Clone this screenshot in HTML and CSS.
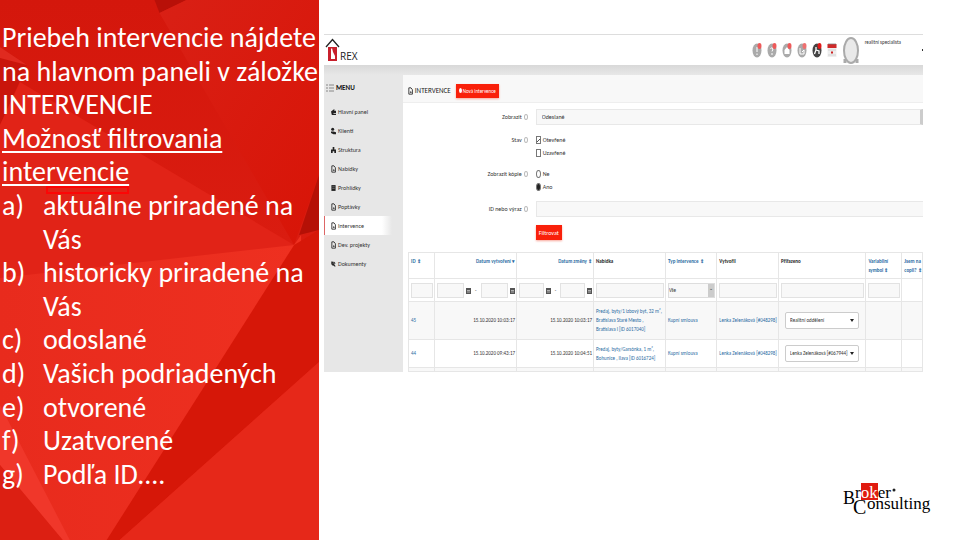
FILE: index.html
```
<!DOCTYPE html>
<html lang="sk">
<head>
<meta charset="utf-8">
<title>Intervencie</title>
<link rel="stylesheet" href="styles.css">
</head>
<body>
<svg class="defs" width="0" height="0" aria-hidden="true">
  <symbol id="doc" viewBox="0 0 6 9"><path d="M1 .7h2.6L5.3 3v5.3H1z" fill="none" stroke="#222" stroke-width="1"/><path d="M2 6.5l1.4-2 1.2 2z" fill="#222"/></symbol>
  <symbol id="share" viewBox="0 0 6 9"><path d="M0 4l4-3v2h2v3H3v1h3v1H1z" fill="#222"/></symbol>
  <symbol id="people" viewBox="0 0 6 9"><circle cx="2" cy="2.5" r="1.8" fill="#222"/><path d="M0 5h3l3 1v2.500H3L0 7z" fill="#222"/></symbol>
  <symbol id="tree" viewBox="0 0 6 9"><path d="M2 1h2v3h2v4H4V6H2v2H0V4h2z" fill="#222"/></symbol>
  <symbol id="list" viewBox="0 0 6 9"><path d="M.5 1h5v7h-5z" fill="#222"/><path d="M1.500 3h3M1.500 5h3" stroke="#aaa" stroke-width=".6"/></symbol>
  <symbol id="clip" viewBox="0 0 6 9"><path d="M1 1.500l4 6M1 1.500v3l2 2M3 2l2 2" fill="none" stroke="#222" stroke-width="1.300"/></symbol>
  <symbol id="cal" viewBox="0 0 5 7"><path d="M0 1h5v6H0z" fill="#555"/><path d="M1 3.500h3M1 5h3" stroke="#ddd" stroke-width=".7"/></symbol>
</svg>
<main class="slide">
  <section class="notes">
    <svg class="facets" viewBox="0 0 320 540" preserveAspectRatio="none" aria-hidden="true">
      <defs>
        <linearGradient id="base" x1="0" y1="0" x2="0" y2="1"><stop offset="0" stop-color="#d4170c"/><stop offset="1" stop-color="#e12215"/></linearGradient>
        <linearGradient id="glow" x1="0" y1="0" x2="1" y2="0"><stop offset="0" stop-color="#e82b1d"/><stop offset="1" stop-color="#ee3020"/></linearGradient>
        <linearGradient id="right" x1="0" y1="0" x2="1" y2="1"><stop offset="0" stop-color="#d92015"/><stop offset="1" stop-color="#d81407"/></linearGradient>
      </defs>
      <path d="M0 0h320v540H0z" fill="url(#base)"/>
      <path d="M155 0h32l-27 13z" fill="#b81008"/>
      <path d="M187 0h133v175l-25 70L160 13z" fill="url(#right)"/>
      <path d="M0 47l27 18L0 125z" fill="#c9150b"/>
      <path d="M0 47l27 18L0 58z" fill="#e02a1f"/>
      <path d="M20 82L295 245 0 295V125z" fill="#e12317"/>
      <path d="M0 278l295-33 7-10v75L108 540H0z" fill="url(#glow)"/>
      <path d="M295 245l25-15v132L120 540h-13z" fill="#d61708"/>
      <path d="M320 175l-20 60 20-5z" fill="#b51006"/>
      <path d="M320 362v178H120z" fill="#e62819"/>
      <path d="M0 405l70 135h-8L0 465z" fill="#f0372a"/>
      <path d="M0 465l63 75H0z" fill="#dc1f12"/>
    </svg>
    <div class="copy">
      <p>Priebeh intervencie nájdete na hlavnom paneli v záložke INTERVENCIE</p>
      <p><u>Možnosť filtrovania intervencie</u></p>
      <ol class="points">
        <li><span>a)</span><span>aktuálne priradené na Vás</span></li>
        <li><span>b)</span><span>historicky priradené na Vás</span></li>
        <li><span>c)</span><span>odoslané</span></li>
        <li><span>d)</span><span>Vašich podriadených</span></li>
        <li><span>e)</span><span>otvorené</span></li>
        <li><span>f)</span><span>Uzatvorené</span></li>
        <li><span>g)</span><span>Podľa ID....</span></li>
      </ol>
      <span class="marker"></span>
    </div>
  </section>

  <section class="stage">
    <div class="app">
      <header class="topbar">
        <svg class="house" viewBox="0 0 15 24" aria-hidden="true"><path d="M1 9l6.500-7.500L14 9" fill="none" stroke="#222" stroke-width="1.300"/><path d="M3 9h9v14H3z" fill="#c8202c"/><path d="M6 11l1-1 1 4 2 4v3H6z" fill="#fff"/></svg>
        <span class="brand">REX</span>
        <div class="tools">
          <svg class="badge" viewBox="0 0 10 16"><ellipse cx="5" cy="8.500" rx="4.500" ry="7" fill="#aaa"/><path d="M5 5v5M5 11.500v1.500" stroke="#fff" stroke-width="1"/><ellipse cx="7.500" cy="4" rx="2" ry="3" fill="#ee5a5a"/></svg>
          <svg class="badge" viewBox="0 0 10 16"><ellipse cx="5" cy="8.500" rx="4.500" ry="7" fill="#aaa"/><path d="M3.500 7q1.500-3 2.500 0L5 9.500M5 11v2" stroke="#fff" stroke-width="1" fill="none"/><ellipse cx="7.500" cy="4" rx="2" ry="3" fill="#ee5a5a"/></svg>
          <svg class="badge" viewBox="0 0 10 16"><ellipse cx="5" cy="8.500" rx="4.500" ry="7" fill="#aaa"/><path d="M2.500 8L5 5l2.500 3v4h-5z" fill="#fff"/><ellipse cx="7.500" cy="4" rx="2" ry="3" fill="#ee5a5a"/></svg>
          <svg class="badge" viewBox="0 0 10 16"><ellipse cx="5" cy="8.500" rx="4.500" ry="7" fill="#aaa"/><path d="M3 6v6h4V8L5 10" stroke="#fff" stroke-width="1" fill="none"/><ellipse cx="7.500" cy="4" rx="2" ry="3" fill="#ee7070"/></svg>
          <svg class="badge" viewBox="0 0 10 16"><ellipse cx="5" cy="8.500" rx="4.500" ry="7" fill="#444"/><path d="M4 5v3l-1.500 4M4 8l3 1v3" stroke="#fff" stroke-width="1.300" fill="none"/><ellipse cx="7.500" cy="4" rx="2" ry="3" fill="#e01818"/></svg>
          <svg class="badge" viewBox="0 0 10 16"><path d="M.5 2h9v13h-9z" fill="#eee"/><path d="M.5 2h9v4h-9z" fill="#cf2a2a"/><path d="M2 1v2M4 1v2M6 1v2M8 1v2" stroke="#777" stroke-width=".7"/><path d="M1.500 8h7M1.500 13h7" stroke="#bbb" stroke-dasharray="1 1"/><path d="M4 10.500h2" stroke="#c22" stroke-width="2"/></svg>
          <svg class="avatar" viewBox="0 0 18 29"><path d="M3 27v-4M15 27v-4" stroke="#aaa" stroke-width="3"/><ellipse cx="9" cy="14.500" rx="7" ry="12.500" fill="#e9e9e9" stroke="#aaa" stroke-width="2"/></svg>
          <span class="user">realitní specialista</span>
          <span class="caret"></span>
        </div>
      </header>
      <div class="body">
        <nav class="menu">
          <h2><svg class="burger" viewBox="0 0 8 8" aria-hidden="true"><path d="M0 1h2M3 1h5M0 4h2M3 4h5M0 7h2M3 7h5" stroke="#888" stroke-width="1"/></svg>MENU</h2>
          <a href="#"><svg class="ico"><use href="#share"/></svg>Hlavní panel</a>
          <a href="#"><svg class="ico"><use href="#people"/></svg>Klienti</a>
          <a href="#"><svg class="ico"><use href="#tree"/></svg>Struktura</a>
          <a href="#"><svg class="ico"><use href="#doc"/></svg>Nabídky</a>
          <a href="#"><svg class="ico"><use href="#list"/></svg>Prohlídky</a>
          <a href="#"><svg class="ico"><use href="#doc"/></svg>Poptávky</a>
          <a href="#" class="active"><svg class="ico"><use href="#doc"/></svg>Intervence</a>
          <a href="#"><svg class="ico"><use href="#doc"/></svg>Dev. projekty</a>
          <a href="#"><svg class="ico"><use href="#clip"/></svg>Dokumenty</a>
        </nav>
        <div class="panel">
          <div class="head">
            <svg class="ico"><use href="#doc"/></svg>
            <h1>INTERVENCE</h1>
            <button class="red" type="button"><span class="plus"></span>Nová intervence</button>
          </div>
          <form class="filter">
            <label for="show">Zobrazit <i class="info"></i></label>
            <select id="show" class="wide"><option>Odeslané</option></select>
            <span class="name">Stav <i class="info"></i></span>
            <div class="choices">
              <label><input type="checkbox" checked>Otevřené</label>
              <label><input type="checkbox">Uzavřené</label>
            </div>
            <span class="name">Zobrazit kópie <i class="info"></i></span>
            <div class="choices">
              <label><input type="radio" name="copy">Ne</label>
              <label><input type="radio" name="copy" checked>Ano</label>
            </div>
            <label for="term">ID nebo výraz <i class="info"></i></label>
            <input id="term" class="wide" type="text">
            <button class="red submit" type="button">Filtrovat</button>
          </form>
          <table>
            <colgroup><col class="c1"><col class="c2"><col class="c3"><col class="c4"><col class="c5"><col class="c6"><col class="c7"><col class="c8"><col class="c9"></colgroup>
            <thead>
              <tr class="titles"><th><a href="#">ID ⇕</a></th><th class="num"><a href="#">Datum vytvoření ▾</a></th><th class="num"><a href="#">Datum změny ⇕</a></th><th>Nabídka</th><th><a href="#">Typ intervence ⇕</a></th><th>Vytvořil</th><th>Přiřazeno</th><th><a href="#">Variabilní<br>symbol ⇕</a></th><th><a href="#">Jsem na<br>copii? ⇕</a></th></tr>
              <tr class="search">
                <td><input type="text" aria-label="ID"></td>
                <td><div class="range"><input type="text" aria-label="Vytvoření od"><svg class="cal"><use href="#cal"/></svg><span>-</span><input type="text" aria-label="Vytvoření do"><svg class="cal"><use href="#cal"/></svg></div></td>
                <td><div class="range"><input type="text" aria-label="Změna od"><svg class="cal"><use href="#cal"/></svg><span>-</span><input type="text" aria-label="Změna do"><svg class="cal"><use href="#cal"/></svg></div></td>
                <td><input type="text" aria-label="Nabídka"></td>
                <td><div class="pick"><select aria-label="Typ"><option>Vše</option></select><span class="drop">⌄</span></div></td>
                <td><input type="text" aria-label="Vytvořil"></td>
                <td><input type="text" aria-label="Přiřazeno"></td>
                <td><input type="text" aria-label="Symbol"></td>
                <td></td>
              </tr>
            </thead>
            <tbody>
              <tr class="odd tall"><td><a href="#">45</a></td><td class="num">15.10.2020 10:03:17</td><td class="num">15.10.2020 10:03:17</td><td><a href="#">Predaj, byty/1 izbový byt, 32 m², Bratislava Staré Mesto , Bratislava I [ID 6017040]</a></td><td><a href="#">Kupní smlouva</a></td><td><a href="#">Lenka Zelenáková [#048298]</a></td><td><div class="assign"><select aria-label="Přiřazeno 45"><option>Realitní oddělení</option></select></div></td><td></td><td></td></tr>
              <tr><td><a href="#">44</a></td><td class="num">15.10.2020 09:43:17</td><td class="num">15.10.2020 10:04:51</td><td><a href="#">Predaj, byty/Garsónka, 1 m², Bohunice , Ilava [ID 6016724]</a></td><td><a href="#">Kupní smlouva</a></td><td><a href="#">Lenka Zelenáková [#048298]</a></td><td><div class="assign"><select aria-label="Přiřazeno 44"><option>Lenka Zelenáková [#067944]</option></select></div></td><td></td><td></td></tr>
              <tr class="odd rest"><td></td><td></td><td></td><td></td><td></td><td></td><td></td><td></td><td></td></tr>
            </tbody>
          </table>
        </div>
      </div>
    </div>
    <svg class="logo" viewBox="0 0 90 36" role="img" aria-label="Broker Consulting">
      <path d="M18 1h17v17H18z" fill="#e01b10"/>
      <text x="0" y="22" class="big">B</text><text x="12" y="16" class="small">r<tspan fill="#fff">ok</tspan>er</text><circle cx="51" cy="8" r="1.500" fill="#222"/>
      <text x="10" y="32" class="cap">C</text><text x="24" y="27" class="small">onsulting</text>
    </svg>
  </section>
</main>
</body>
</html>
```
FILE: styles.css
```
* { box-sizing: border-box; }
body { margin: 0; background: #fff; font-family: Carlito, Lato, sans-serif; font-size: 6px; line-height: 8px; color: #333; }
a { color: #2b6ca3; text-decoration: none; }
button, input, select { font: inherit; color: inherit; margin: 0; border-radius: 0; }
.defs { position: absolute; }

.slide { display: grid; grid-template-columns: minmax(0, 1fr) minmax(0, 2fr); min-height: 100vh; }

.notes { position: relative; margin-right: 1px; overflow: hidden; background: #dc1c10; }
.facets { position: absolute; inset: 0; width: 100%; height: 100%; }
.copy { position: relative; margin-right: -4px; padding: 21px 0 0 2px; font-size: 28px; line-height: 1.2; color: #fff; }
.copy p { margin: 0; }
.copy u { text-decoration-thickness: 2px; text-underline-offset: 3px; }
.points { list-style: none; margin: 0; padding: 0; }
.points li { display: grid; grid-template-columns: 41px 1fr; padding-right: 16px; }
.marker { position: absolute; left: 46px; top: 186px; width: 83px; height: 8px; border: 2px solid #fc0606; }

.stage { display: flex; flex-direction: column; justify-content: space-between; padding: 34px 37px 22px 4px; }
.app { overflow: hidden; border-top: 1px solid #ddd; background: #e7e7e7; }

.topbar { display: flex; align-items: center; height: 30px; padding-left: 1px; background: #fff; }
.house { width: 15px; height: 24px; }
.brand { align-self: flex-end; margin-bottom: 2px; font-family: "Open Sans", sans-serif; font-size: 10px; line-height: 14px; color: #222; }
.tools { display: flex; align-items: center; gap: 5px; margin-left: auto; }
.badge { width: 10px; height: 16px; }
.avatar { width: 18px; height: 29px; }
.user { align-self: flex-start; margin-top: 2px; font-size: 5px; }
.caret { width: 1px; height: 2px; margin-left: 16px; background: #333; }

.body { display: flex; background: linear-gradient(#d8d8d8, #e7e7e7 10px); }
.menu { flex: 0 0 13%; padding-top: 18px; }
.menu h2 { display: flex; align-items: center; gap: 2px; margin: 0 0 9px; padding-left: 2px; font-size: 7px; line-height: 10px; color: #111; }
.burger { width: 8px; height: 8px; }
.menu a { display: flex; align-items: center; gap: 2px; height: 19px; margin-right: 10px; padding-left: 7px; color: #333; }
.menu .active { background: linear-gradient(90deg, #fff 85%, #e7e7e7); border-left: 1px solid #d66; padding-left: 6px; }
.ico { flex: none; width: 5px; height: 8px; }

.panel { flex: 1; min-width: 0; margin: 10px 0 0 1px; background: #fff; }
.head { display: flex; align-items: center; gap: 2px; height: 28px; padding: 5px 0 0 5px; background: #f8f8f8; border-bottom: 1px solid #eee; }
.head h1 { margin: 0 3px 0 0; font-size: 7px; font-weight: 400; color: #222; }
.red { border: 0; padding: 0 3px; height: 14px; background: #f9200a; color: #fff; box-shadow: 0 1px 2px #f9a79c; }
.head .red { font-size: 5px; }
.plus { display: inline-block; width: 3px; height: 5px; margin-right: 1px; border-radius: 50%; background: #fff; }

.filter { display: grid; grid-template-columns: 24% 1fr; column-gap: 8px; row-gap: 8px; padding: 6px 0 12px; }
.filter > label, .name { display: flex; align-items: center; justify-content: flex-end; gap: 2px; }
.name { height: 13px; }
.info { width: 4px; height: 6px; border: 1px solid #bbb; border-radius: 50%; }
.wide { width: 100%; height: 16px; padding: 0 5px; appearance: none; background: #f8f8f8; border: 1px solid #e8e8e8; border-right: 0; outline: 0; }
select.wide { border-right: 3px solid #ccc; }
.choices label { display: flex; align-items: center; gap: 2px; height: 13px; }
.choices input { appearance: none; width: 5px; height: 8px; border: 1px solid #777; background: #fff; }
.choices input[type="radio"] { border-radius: 50%; }
.choices input[type="radio"]:checked { background: #222; }
.choices input[type="checkbox"]:checked { background: linear-gradient(135deg, #fff 45%, #555 45%, #555 60%, #fff 60%); }
.submit { grid-column: 2; justify-self: start; height: 15px; }

table { width: 99%; margin-left: 1%; table-layout: fixed; border-collapse: collapse; font-size: 5px; }
.c1 { width: 5%; } .c2 { width: 16%; } .c3 { width: 15%; } .c4 { width: 14%; } .c5 { width: 10%; }
.c6 { width: 12%; } .c7 { width: 17%; } .c8 { width: 7%; } .c9 { width: 4%; }
th, td { padding: 0 1px 0 2px; border: 1px solid #e6e6e6; text-align: left; line-height: 9px; }
th { padding-top: 4px; vertical-align: top; color: #222; white-space: nowrap; }
.num { text-align: right; }
.titles { height: 26px; }
.search { height: 23px; }
.search input { display: block; width: 100%; height: 15px; padding: 0 2px; background: #f8f8f8; border: 1px solid #e2e2e2; }
.range { display: flex; align-items: center; gap: 2px; }
.range input { flex: 1; min-width: 0; }
.cal { flex: none; width: 5px; height: 7px; }
.range span { padding: 0 2px; }
.pick { display: flex; height: 15px; border: 1px solid #ddd; background: #f8f8f8; }
.pick select { flex: 1; min-width: 0; border: 0; appearance: none; background: none; }
.drop { width: 6px; background: #ccc; text-align: center; }
.odd { background: #f8f8f8; }
tbody tr { height: 28px; }
tbody .tall { height: 38px; }
tbody .rest { height: 4px; }
.rest td { line-height: 2px; }
.assign { position: relative; margin: 0 5px 0 4px; }
.assign select { display: block; width: 100%; height: 17px; padding: 0 9px 0 4px; appearance: none; background: #fff; border: 1px solid #ccc; border-radius: 2px; }
.assign::after { content: ""; position: absolute; right: 5px; top: 7px; border: 2px solid transparent; border-top: 3px solid #222; border-bottom: 0; }

.logo { align-self: flex-end; width: 90px; height: 36px; margin-right: -10px; font-family: "Liberation Serif", serif; }
.logo .big { font-size: 18px; }
.logo .cap { font-size: 20px; }
.logo .small { font-size: 17px; }
```
